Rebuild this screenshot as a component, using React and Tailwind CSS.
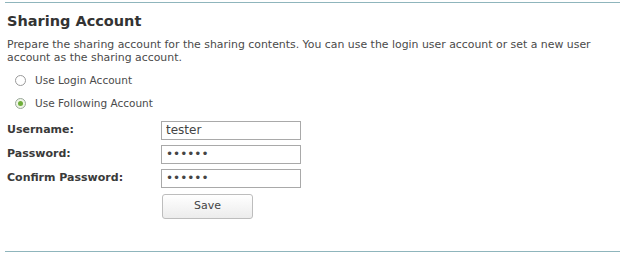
import React, { useState } from "react";

const font = { fontFamily: '"DejaVu Sans", Verdana, sans-serif' };

const Radio = ({ checked, label, onClick }) => (
  <div className="flex items-center h-[23px] cursor-pointer" onClick={onClick}>
    <span
      className={`ml-[10px] w-[11px] h-[11px] rounded-full border flex items-center justify-center ${
        checked ? "border-[#9aa79a] bg-[#eef5e6]" : "border-[#9a9a9a] bg-white"
      }`}
    >
      {checked && <span className="w-[5px] h-[5px] rounded-full bg-[#6fae3a]" />}
    </span>
    <span className="ml-[9px] text-[10.5px] text-[#4a4a4a]">{label}</span>
  </div>
);

const Row = ({ label, type, value }) => (
  <div className="flex items-center h-[24px]">
    <label className="w-[154px] text-[11px] font-bold text-[#3a3a3a]">{label}</label>
    <input
      type={type}
      defaultValue={value}
      className="w-[140px] h-[19px] border border-[#a9a9a9] px-[4px] text-[12px] text-[#444] outline-none bg-white"
      style={font}
    />
  </div>
);

export default function App() {
  const [useLogin, setUseLogin] = useState(false);

  return (
    <div className="w-[624px] h-[255px] bg-white px-[5px] pt-[2px] flex flex-col" style={font}>
      <div className="w-[615px] border-t border-[#8fb5bc]" />

      <h2 className="mt-[9px] ml-[2px] text-[14.5px] leading-[18px] font-bold text-[#333]">
        Sharing Account
      </h2>

      <p className="mt-[8px] ml-[2px] text-[10.9px] leading-[13px] text-[#4a4a4a]">
        Prepare the sharing account for the sharing contents. You can use the login user account or set a new user
        account as the sharing account.
      </p>

      <div className="mt-[5px] flex flex-col">
        <Radio checked={useLogin} label="Use Login Account" onClick={() => setUseLogin(true)} />
        <Radio checked={!useLogin} label="Use Following Account" onClick={() => setUseLogin(false)} />
      </div>

      <div className="mt-[3px] ml-[2px] flex flex-col">
        <Row label="Username:" type="text" value="tester" />
        <Row label="Password:" type="password" value="123456" />
        <Row label="Confirm Password:" type="password" value="123456" />
        <div className="mt-[2px] ml-[155px]">
          <button
            className="w-[91px] h-[25px] rounded-[3px] border border-[#bdbdbd] bg-gradient-to-b from-white to-[#ececec] text-[11px] text-[#444]"
            style={font}
          >
            Save
          </button>
        </div>
      </div>

      <div className="mt-auto mb-[3px] w-[615px] border-t border-[#8fb5bc]" />
    </div>
  );
}
